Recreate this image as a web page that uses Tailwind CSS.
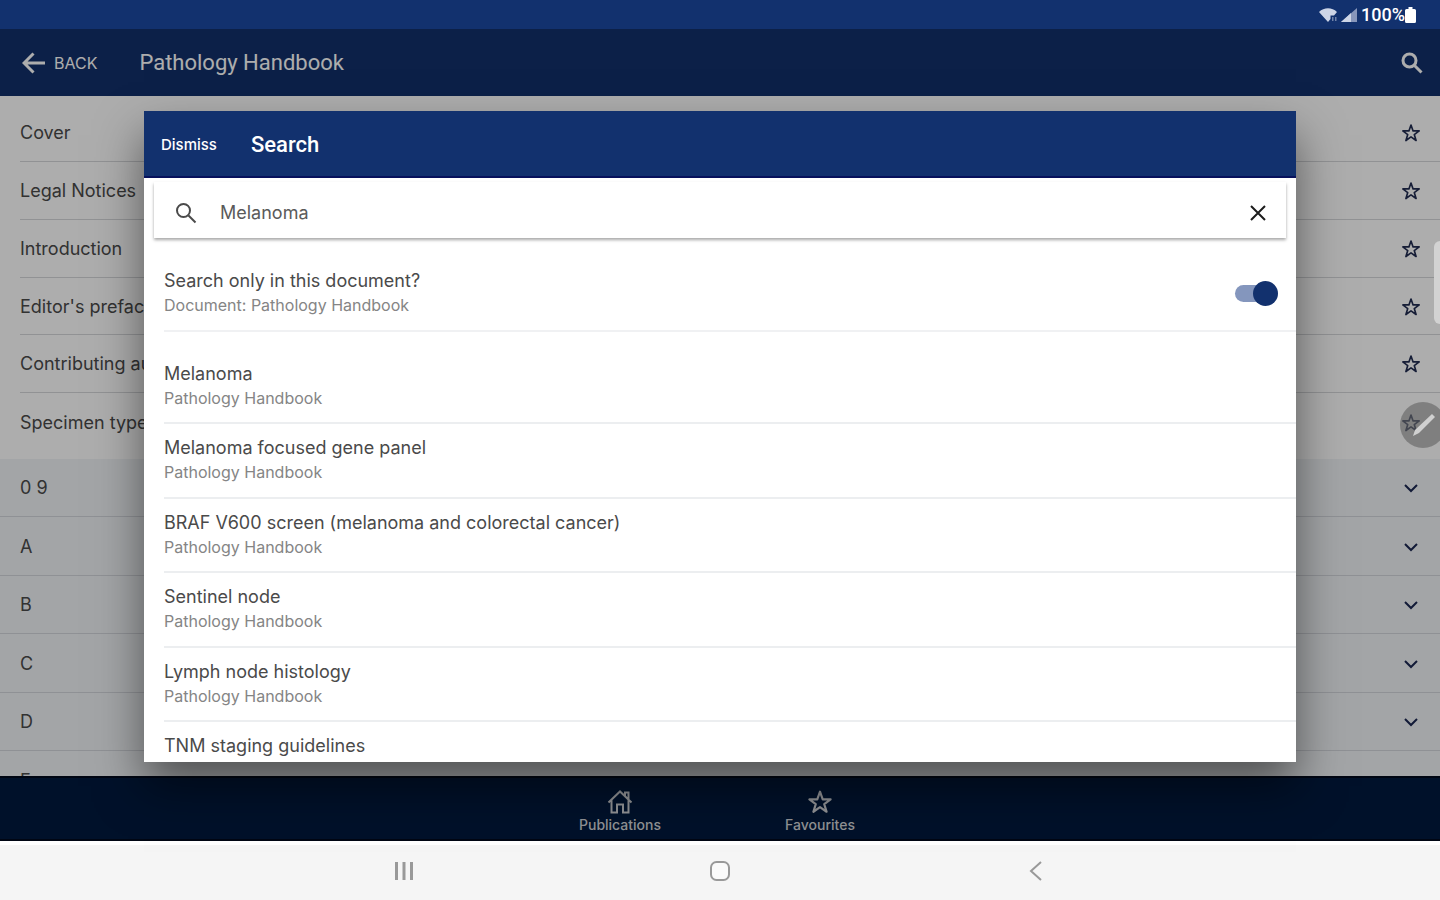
<!DOCTYPE html>
<html lang="en">
<head>
  <meta charset="UTF-8" />
  <meta name="viewport" content="width=device-width, initial-scale=1.0" />
  <title>Pathology Handbook</title>
  <script src="https://cdn.jsdelivr.net/npm/@tailwindcss/browser@4"></script>
</head>
<body class="h-screen overflow-hidden flex flex-col bg-white font-['Inter','Liberation_Sans',sans-serif] text-lg text-[#4a4a4a]">

  <!-- Shared icons -->
  <svg class="hidden">
    <symbol id="star" viewBox="0 0 24 24">
      <path d="M12 2.5l2.5 7h7.3l-5.9 4.4 2.2 7.1-6.1-4.3L5.9 21l2.2-7.1-5.9-4.4h7.3z" fill="none" stroke="currentColor" stroke-linejoin="round" />
    </symbol>
    <symbol id="chevron" viewBox="0 0 16 16">
      <path d="M2 5l6 6 6-6" fill="none" stroke="currentColor" stroke-width="2" />
    </symbol>
    <symbol id="search" viewBox="0 0 24 24">
      <circle cx="9.5" cy="9.5" r="6.5" fill="none" stroke="currentColor" />
      <path d="M14.5 14.5l7 7" fill="none" stroke="currentColor" />
    </symbol>
  </svg>

  <!-- Status bar -->
  <div class="h-[29px] shrink-0 bg-[#12316e] flex items-center justify-end gap-1 pr-6 text-white">
    <svg class="w-[18px] h-[14px]" viewBox="0 0 18 14" fill="#cdd5e6">
      <path d="M0 4C5-1 13-1 18 4l-3 3.5h-3.5V11L9 14z" />
      <path d="M13 9h1.5v4H13zM16 9h1.5v4H16z" opacity=".5" />
    </svg>
    <svg class="w-[16px] h-[14px]" viewBox="0 0 16 14">
      <path d="M0 14L16 0v14z" fill="#8796bb" />
      <path d="M0 14l10-9v9z" fill="#cdd5e6" />
    </svg>
    <div class="flex items-center">
      <span class="text-lg leading-5 font-medium font-[Roboto,sans-serif]">100%</span>
      <svg class="w-[11px] h-[16px]" viewBox="0 0 11 16" fill="#fff">
        <path d="M3.5 0h4v2H9.500a1.500 1.500 0 0 1 1.500 1.500v11a1.500 1.500 0 0 1-1.500 1.500h-8A1.500 1.500 0 0 1 0 14.500v-11A1.500 1.500 0 0 1 1.500 2h2z" />
      </svg>
    </div>
  </div>

  <!-- App -->
  <div class="relative flex-1 min-h-0 flex flex-col">
    <header class="h-[67px] shrink-0 bg-[#12306b] flex items-center pl-[22px] pr-4 pt-px text-white">
      <button class="flex items-center gap-2 text-base">
        <svg class="w-6 h-6" viewBox="0 0 24 24" fill="none" stroke="currentColor" stroke-width="3">
          <path d="M11.5 2.5L2 12l9.5 9.5M2 12h21" />
        </svg>
        BACK
      </button>
      <h1 class="ml-[42px] flex-1 text-[22px] font-[Roboto,sans-serif]">Pathology Handbook</h1>
      <button aria-label="Search"><svg class="w-6 h-6 stroke-3"><use href="#search" /></svg></button>
    </header>

    <main class="flex-1 min-h-0 overflow-hidden bg-white">
      <ul class="py-2 pl-5">
        <li class="h-[58px] flex items-center justify-between pt-px pr-[19px] border-b border-[#d6d8da]">Cover<button aria-label="Favourite Cover" class="text-[#222d52]"><svg class="w-5 h-5 stroke-2"><use href="#star" /></svg></button></li>
        <li class="h-[58px] flex items-center justify-between pt-px pr-[19px] border-b border-[#d6d8da]">Legal Notices<button aria-label="Favourite Legal Notices" class="text-[#222d52]"><svg class="w-5 h-5 stroke-2"><use href="#star" /></svg></button></li>
        <li class="h-[58px] flex items-center justify-between pt-px pr-[19px] border-b border-[#d6d8da]">Introduction<button aria-label="Favourite Introduction" class="text-[#222d52]"><svg class="w-5 h-5 stroke-2"><use href="#star" /></svg></button></li>
        <li class="h-[57px] flex items-center justify-between pt-px pr-[19px] border-b border-[#d6d8da]">Editor's preface<button aria-label="Favourite Editor's preface" class="text-[#222d52]"><svg class="w-5 h-5 stroke-2"><use href="#star" /></svg></button></li>
        <li class="h-[58px] flex items-center justify-between pt-px pr-[19px] border-b border-[#d6d8da]">Contributing authors<button aria-label="Favourite Contributing authors" class="text-[#222d52]"><svg class="w-5 h-5 stroke-2"><use href="#star" /></svg></button></li>
        <li class="h-[58px] flex items-center justify-between pt-px pr-[19px]">Specimen types<button aria-label="Favourite Specimen types" class="text-[#222d52]"><svg class="w-5 h-5 stroke-2"><use href="#star" /></svg></button></li>
      </ul>
      <div class="bg-[#f0f3f6]">
        <button class="w-full h-[58px] px-5 pt-px flex items-center justify-between border-b border-[#d3d6dc]">0 9<svg class="w-4 h-4 mr-px text-[#1b2752]"><use href="#chevron" /></svg></button>
        <button class="w-full h-[59px] px-5 pt-px flex items-center justify-between border-b border-[#d3d6dc]">A<svg class="w-4 h-4 mr-px text-[#1b2752]"><use href="#chevron" /></svg></button>
        <button class="w-full h-[58px] px-5 pt-px flex items-center justify-between border-b border-[#d3d6dc]">B<svg class="w-4 h-4 mr-px text-[#1b2752]"><use href="#chevron" /></svg></button>
        <button class="w-full h-[59px] px-5 pt-px flex items-center justify-between border-b border-[#d3d6dc]">C<svg class="w-4 h-4 mr-px text-[#1b2752]"><use href="#chevron" /></svg></button>
        <button class="w-full h-[58px] px-5 pt-px flex items-center justify-between border-b border-[#d3d6dc]">D<svg class="w-4 h-4 mr-px text-[#1b2752]"><use href="#chevron" /></svg></button>
        <button class="w-full h-[59px] px-5 pt-px flex items-center justify-between">E<svg class="w-4 h-4 mr-px text-[#1b2752]"><use href="#chevron" /></svg></button>
      </div>
    </main>

    <!-- Tabs -->
    <nav class="h-[65px] shrink-0 bg-[#001a3e] border-y-2 border-[#000a1c] flex justify-center text-[#d4d6da] text-[14px] leading-4 font-medium">
      <a href="#" class="w-[200px] flex flex-col items-center justify-center gap-0.5 pt-1">
        <svg class="w-[26px] h-[26px]" viewBox="0 0 26 26" fill="none" stroke="currentColor" stroke-width="2">
          <path d="M1.5 13.5L13 2.5l11.5 11M4.5 11v12.5h5.5v-8h6v8h5.5V11M18 7V3.5h3.5v7" />
        </svg>
        Publications
      </a>
      <a href="#" class="w-[200px] flex flex-col items-center justify-center gap-0.5 pt-1">
        <svg class="w-[26px] h-[26px] stroke-2"><use href="#star" /></svg>
        Favourites
      </a>
    </nav>

    <!-- Search modal -->
    <div class="absolute inset-0 pt-[3px] bg-black/32 flex items-center justify-center">
      <section role="dialog" aria-label="Search" class="w-4/5 h-[calc(80%+4px)] flex flex-col bg-white overflow-hidden shadow-[0_24px_44px_rgba(0,0,0,0.5)]">
        <header class="h-[67px] shrink-0 bg-[#12316e] shadow-[inset_0_-2px_0_#07115c] flex items-center pl-[17px] pt-px text-white">
          <button class="text-[15px] font-medium">Dismiss</button>
          <h2 class="ml-[34px] text-[22px] font-medium font-[Roboto,sans-serif]">Search</h2>
        </header>
        <div class="px-[10px] pt-1">
          <label class="h-[56px] px-5 pt-1.5 flex items-center gap-6 shadow-[0_2px_3px_rgba(0,0,0,0.35)]">
            <svg class="w-6 h-6 -mr-0.5 stroke-2 text-[#4a4a4a]"><use href="#search" /></svg>
            <input type="text" aria-label="Search text" value="Melanoma" class="flex-1 text-lg text-[#5a5a5a] outline-none" />
            <button aria-label="Clear">
              <svg class="w-4 h-4" viewBox="0 0 16 16" stroke="#1c1c1c" stroke-width="2"><path d="M1 1l14 14M15 1L1 15" /></svg>
            </button>
          </label>
        </div>
        <div class="ml-5 mt-[19px] h-[75px] shrink-0 pr-[18px] flex items-center justify-between border-b-2 border-[#f0f1f3]">
          <label for="only-here" class="leading-6">Search only in this document?<span class="block text-base leading-6 text-[#858585]">Document: Pathology Handbook</span></label>
          <input id="only-here" type="checkbox" checked class="appearance-none relative w-[43px] h-[25px] before:absolute before:left-0 before:top-1 before:w-[36px] before:h-[17px] before:rounded-full before:bg-[#8496bd] after:absolute after:right-0 after:top-0 after:w-[25px] after:h-[25px] after:rounded-full after:bg-[#12316e]" />
        </div>
        <ul class="ml-5 mt-[18px]">
          <li class="h-[74px] flex flex-col justify-center border-b-2 border-[#eceef0] leading-6">Melanoma<span class="text-base leading-6 text-[#858585]">Pathology Handbook</span></li>
          <li class="h-[75px] flex flex-col justify-center border-b-2 border-[#eceef0] leading-6">Melanoma focused gene panel<span class="text-base leading-6 text-[#858585]">Pathology Handbook</span></li>
          <li class="h-[74px] flex flex-col justify-center border-b-2 border-[#eceef0] leading-6">BRAF V600 screen (melanoma and colorectal cancer)<span class="text-base leading-6 text-[#858585]">Pathology Handbook</span></li>
          <li class="h-[75px] flex flex-col justify-center border-b-2 border-[#eceef0] leading-6">Sentinel node<span class="text-base leading-6 text-[#858585]">Pathology Handbook</span></li>
          <li class="h-[74px] flex flex-col justify-center border-b-2 border-[#eceef0] leading-6">Lymph node histology<span class="text-base leading-6 text-[#858585]">Pathology Handbook</span></li>
          <li class="h-[75px] flex flex-col justify-center border-b-2 border-[#eceef0] leading-6">TNM staging guidelines<span class="text-base leading-6 text-[#858585]">Pathology Handbook</span></li>
        </ul>
      </section>
    </div>

    <!-- Edge handle and floating pen, above everything -->
    <div class="absolute right-0 top-[212px] w-[6px] h-[83px] rounded-l-md bg-[#d2d2d2]"></div>
    <div class="absolute -right-[6px] top-[373px] w-[46px] h-[46px] rounded-full bg-[#606060]/60">
      <svg class="w-full h-full" viewBox="0 0 46 46" fill="#d0d0d0"><path d="M13 34l2-6 17-16 3 3-16 16z" /></svg>
    </div>
  </div>

  <!-- System navigation -->
  <div class="h-[59px] shrink-0 bg-[#f5f5f5] shadow-[inset_0_4px_0_#fff] flex items-center justify-center gap-[296px] text-[#999999]">
    <button aria-label="Recents"><svg class="w-5 h-5" viewBox="0 0 20 20" stroke="currentColor" stroke-width="3"><path d="M2.5 1v18M10 1v18M17.5 1v18" /></svg></button>
    <button aria-label="Home"><svg class="w-5 h-5" viewBox="0 0 20 20" fill="#fafafa" stroke="currentColor" stroke-width="2"><rect x="1" y="1" width="18" height="18" rx="5.5" /></svg></button>
    <button aria-label="Back"><svg class="w-5 h-5" viewBox="0 0 20 20" fill="none" stroke="currentColor" stroke-width="2"><path d="M15 1l-10 9 10 9" /></svg></button>
  </div>

</body>
</html>
